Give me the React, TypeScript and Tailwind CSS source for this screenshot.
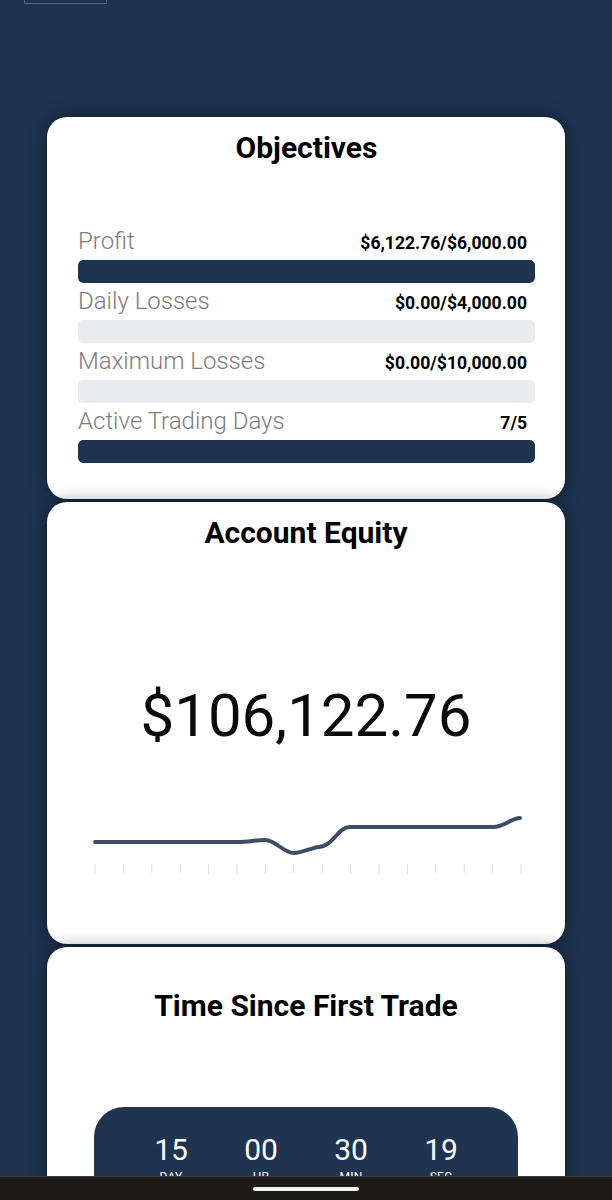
import React from 'react'

const OBJECTIVES = [
  { label: 'Profit', value: '$6,122.76/$6,000.00', pct: 100 },
  { label: 'Daily Losses', value: '$0.00/$4,000.00', pct: 0 },
  { label: 'Maximum Losses', value: '$0.00/$10,000.00', pct: 0 },
  { label: 'Active Trading Days', value: '7/5', pct: 100 },
]

const TIMER = [
  { num: '15', unit: 'DAY' },
  { num: '00', unit: 'HR' },
  { num: '30', unit: 'MIN' },
  { num: '19', unit: 'SEC' },
]

const TICKS = Array.from({ length: 16 }, (_, i) => 2 + i * 28.4)

function EquityChart() {
  return (
    <svg width="432" height="64" viewBox="0 0 432 64" className="ml-[46px] block">
      <path
        d="M2 29 L145 29 C155 29 163 27 172 27 C183 27 190 40 201 40 C210 40 217 35 226 34 C240 33 245 14 257 14 L400 14 C412 14 418 5 427 5"
        fill="none"
        stroke="#3b4e66"
        strokeWidth="4"
        strokeLinecap="round"
      />
      {TICKS.map(x => (
        <line key={x} x1={x} x2={x} y1="51" y2="60" stroke="#dcdcdc" strokeWidth="1" />
      ))}
    </svg>
  )
}

export default function App() {
  return (
    <div className="bg-[#1d334f] min-h-screen font-['Roboto',sans-serif] pb-10">
      {/* cut-off header button */}
      <div className="ml-[24px] w-[83px] h-[4px] border border-t-0 border-[#566883] rounded-b-[2px]" />

      <div className="mt-[113px] mx-[47px] flex flex-col gap-[3px]">
        {/* Objectives */}
        <div className="relative bg-white rounded-[20px] pt-[13px] pl-[31px] pr-[30px] pb-[36px] shadow-[0_0_18px_rgba(0,0,0,0.4)]">
          <h2 className="text-center text-[30px] leading-[36px] font-bold text-black">Objectives</h2>
          <div className="mt-[57px] flex flex-col">
            {OBJECTIVES.map(o => (
              <div key={o.label}>
                <div className="flex items-baseline justify-between h-[37px] pr-[8px]">
                  <span className="text-[24px] leading-[37px] font-light text-[#7d7d7d]">{o.label}</span>
                  <span className="text-[17.6px] font-bold text-black">{o.value}</span>
                </div>
                <div className="h-[23px] rounded-[5px] bg-[#e9ebee] overflow-hidden">
                  <div className="h-full bg-[#1e3450] rounded-[5px]" style={{ width: `${o.pct}%` }} />
                </div>
              </div>
            ))}
          </div>
        </div>

        {/* Account Equity */}
        <div className="relative bg-white rounded-[20px] pt-[13px] pb-[67px] shadow-[0_0_18px_rgba(0,0,0,0.4)]">
          <h2 className="text-center text-[30px] leading-[36px] font-bold text-black">Account Equity</h2>
          <p className="mt-[135px] text-center text-[60px] leading-[60px] text-[#0a0a0a]">$106,122.76</p>
          <div className="mt-[67px]">
            <EquityChart />
          </div>
        </div>

        {/* Time Since First Trade */}
        <div className="relative bg-white rounded-[20px] pt-[41px] pb-[60px] px-[47px] shadow-[0_0_18px_rgba(0,0,0,0.4)]">
          <h2 className="text-center text-[30px] leading-[36px] font-bold text-black">Time Since First Trade</h2>
          <div className="mt-[83px] bg-[#1e3450] rounded-[30px] pt-[26px] pb-[30px] flex justify-center">
            {TIMER.map(t => (
              <div key={t.unit} className="w-[90px] flex flex-col items-center text-white">
                <span className="text-[30px] leading-[34px]">{t.num}</span>
                <span className="mt-[2px] text-[12px] leading-[16px] tracking-wide">{t.unit}</span>
              </div>
            ))}
          </div>
        </div>
      </div>

      {/* system navigation bar */}
      <div className="fixed bottom-0 left-0 right-0 h-[24px] bg-[#1c1b16] border-t border-[#3c3d3a] flex justify-center">
        <div className="mt-[10px] w-[106px] h-[4px] rounded-full bg-[#f2f2f2]" />
      </div>
    </div>
  )
}
